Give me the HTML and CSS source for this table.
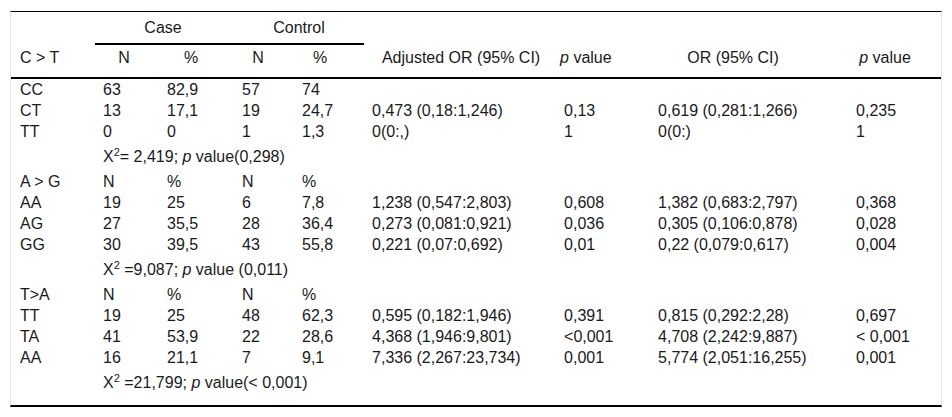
FILE: index.html
```html
<!DOCTYPE html>
<html lang="en">
<head>
<meta charset="utf-8">
<title>Genotype table</title>
<link rel="stylesheet" href="styles.css">
</head>
<body>
<div class="frame">
<table class="tbl">
<colgroup>
<col class="w-lbl"><col class="w-n1"><col class="w-p1"><col class="w-n2"><col class="w-p2"><col class="w-aor"><col class="w-pv1"><col class="w-or"><col class="w-pv2">
</colgroup>
<thead>
<tr>
<th class="blank"></th>
<th colspan="2" class="grp h-case">Case</th>
<th colspan="2" class="grp h-control">Control</th>
<th rowspan="2" class="span h-aor">Adjusted OR (95% CI)</th>
<th rowspan="2" class="span h-pv1"><i>p</i> value</th>
<th rowspan="2" class="span h-or">OR (95% CI)</th>
<th rowspan="2" class="span h-pv2"><i>p</i> value</th>
</tr>
<tr>
<th class="sub lbl">C &gt; T</th>
<th class="sub h-n1">N</th>
<th class="sub h-p1">%</th>
<th class="sub h-n2">N</th>
<th class="sub h-p2">%</th>
</tr>
</thead>
<tbody>
<tr><td class="lbl">CC</td><td>63</td><td>82,9</td><td>57</td><td>74</td><td></td><td></td><td></td><td></td></tr>
<tr><td class="lbl">CT</td><td>13</td><td>17,1</td><td>19</td><td>24,7</td><td>0,473 (0,18:1,246)</td><td>0,13</td><td>0,619 (0,281:1,266)</td><td>0,235</td></tr>
<tr><td class="lbl">TT</td><td>0</td><td>0</td><td>1</td><td>1,3</td><td>0(0:,)</td><td>1</td><td>0(0:)</td><td>1</td></tr>
<tr class="chi"><td class="lbl"></td><td colspan="8">X<sup>2</sup>= 2,419; <i>p</i> value(0,298)</td></tr>
<tr><td class="lbl">A &gt; G</td><td>N</td><td>%</td><td>N</td><td>%</td><td></td><td></td><td></td><td></td></tr>
<tr><td class="lbl">AA</td><td>19</td><td>25</td><td>6</td><td>7,8</td><td>1,238 (0,547:2,803)</td><td>0,608</td><td>1,382 (0,683:2,797)</td><td>0,368</td></tr>
<tr><td class="lbl">AG</td><td>27</td><td>35,5</td><td>28</td><td>36,4</td><td>0,273 (0,081:0,921)</td><td>0,036</td><td>0,305 (0,106:0,878)</td><td>0,028</td></tr>
<tr><td class="lbl">GG</td><td>30</td><td>39,5</td><td>43</td><td>55,8</td><td>0,221 (0,07:0,692)</td><td>0,01</td><td>0,22 (0,079:0,617)</td><td>0,004</td></tr>
<tr class="chi"><td class="lbl"></td><td colspan="8">X<sup>2</sup> =9,087; <i>p</i> value (0,011)</td></tr>
<tr><td class="lbl">T&gt;A</td><td>N</td><td>%</td><td>N</td><td>%</td><td></td><td></td><td></td><td></td></tr>
<tr><td class="lbl">TT</td><td>19</td><td>25</td><td>48</td><td>62,3</td><td>0,595 (0,182:1,946)</td><td>0,391</td><td>0,815 (0,292:2,28)</td><td>0,697</td></tr>
<tr><td class="lbl">TA</td><td>41</td><td>53,9</td><td>22</td><td>28,6</td><td>4,368 (1,946:9,801)</td><td>&lt;0,001</td><td>4,708 (2,242:9,887)</td><td>&lt; 0,001</td></tr>
<tr><td class="lbl">AA</td><td>16</td><td>21,1</td><td>7</td><td>9,1</td><td>7,336 (2,267:23,734)</td><td>0,001</td><td>5,774 (2,051:16,255)</td><td>0,001</td></tr>
<tr class="chi"><td class="lbl"></td><td colspan="8">X<sup>2</sup> =21,799; <i>p</i> value(&lt; 0,001)</td></tr>
</tbody>
</table>
</div>
</body>
</html>
```

FILE: styles.css
```css
html, body {
  margin: 0;
  padding: 0;
  background: #ffffff;
}

body {
  font-family: "Liberation Sans", Arial, sans-serif;
  font-size: 16px;
  color: #1a1a1a;
}

.frame {
  margin: 11px 0 0 10px;
  width: 930px;
  border-top: 1px solid #000;
  border-bottom: 2px solid #000;
  border-left: 1px solid #e6e6e6;
  border-right: 1px solid #e6e6e6;
  padding-bottom: 8px;
}

.tbl {
  width: 930px;
  table-layout: fixed;
  border-collapse: separate;
  border-spacing: 0;
}

.w-lbl { width: 84px; }
.w-n1 { width: 64px; }
.w-p1 { width: 75px; }
.w-n2 { width: 60px; }
.w-p2 { width: 70px; }
.w-aor { width: 192px; }
.w-pv1 { width: 94px; }
.w-or { width: 198px; }
.w-pv2 { width: 93px; }

th {
  font-weight: normal;
  line-height: 21px;
  text-align: center;
  padding: 0 8px;
  white-space: nowrap;
}

.blank {
  padding: 0;
}

.grp {
  padding-top: 5px;
  padding-bottom: 5px;
  border-bottom: 2px solid #000;
}

.sub {
  padding-top: 2px;
  padding-bottom: 9px;
  border-bottom: 2px solid #000;
}

.span {
  vertical-align: bottom;
  padding-bottom: 9px;
  border-bottom: 2px solid #000;
}

th.lbl {
  text-align: left;
  padding-left: 9px;
}

.h-case { padding-right: 11px; }
.h-n1 { padding-right: 14px; }
.h-p1 { padding-right: 19px; }
.h-n2 { padding-right: 20px; }
.h-p2 { padding-right: 26px; }
.h-aor { padding-left: 10px; }
.h-pv1 { padding-right: 60px; padding-left: 4px; }
.h-or { padding-right: 40px; }
.h-pv2 { padding-right: 27px; }

td {
  line-height: 21px;
  padding: 0 8px;
  white-space: nowrap;
  vertical-align: middle;
}

td.lbl {
  padding-left: 9px;
}

.chi td {
  padding-top: 4px;
  padding-bottom: 4px;
}

sup {
  font-size: 11px;
  line-height: 0;
  vertical-align: 6px;
}
```
